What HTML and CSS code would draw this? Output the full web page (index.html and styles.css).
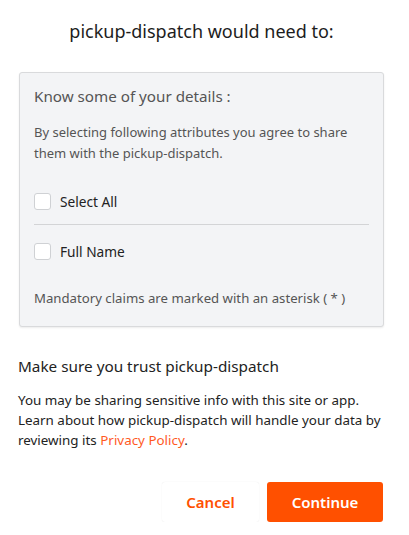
FILE: index.html
```html
<!DOCTYPE html>
<html lang="en">
<head>
<meta charset="utf-8">
<title>Consent</title>
<link rel="stylesheet" href="styles.css">
</head>
<body>
<div class="page">
  <h1 class="title">pickup-dispatch would need to:</h1>
  <div class="card">
    <h2 class="card-title">Know some of your details :</h2>
    <p class="card-desc">By selecting following attributes you agree to share them with the pickup-dispatch.</p>
    <label class="check-row">
      <span class="box"></span>
      <span class="check-label">Select All</span>
    </label>
    <div class="divider"></div>
    <label class="check-row">
      <span class="box"></span>
      <span class="check-label">Full Name</span>
    </label>
    <p class="mandatory">Mandatory claims are marked with an asterisk ( * )</p>
  </div>
  <h3 class="trust-title">Make sure you trust pickup-dispatch</h3>
  <p class="trust-text">You may be sharing sensitive info with this site or app. Learn about how pickup-dispatch will handle your data by reviewing its <a class="link" href="#">Privacy Policy</a>.</p>
  <div class="actions">
    <button class="btn btn-cancel">Cancel</button>
    <button class="btn btn-continue">Continue</button>
  </div>
</div>
</body>
</html>
```

FILE: styles.css
```css
html, body {
  margin: 0;
  padding: 0;
  background: #ffffff;
}
body {
  font-family: "Noto Sans", "Open Sans", sans-serif;
  color: #222222;
}
.page {
  width: 365px;
  margin-left: 19px;
  padding-top: 17px;
}
.title {
  margin: 0;
  text-align: center;
  font-size: 18px;
  font-weight: 400;
  line-height: 28px;
  color: #1d1d1d;
}
.card {
  margin-top: 27px;
  box-sizing: border-box;
  background: #f3f4f6;
  border: 1px solid #d9dadc;
  border-radius: 3px;
  box-shadow: 0 1px 2px rgba(0,0,0,0.08);
  padding: 12px 14px 14px 14px;
  height: 255px;
}
.card-title {
  margin: 0;
  font-size: 15.2px;
  font-weight: 400;
  line-height: 22px;
  color: #555555;
}
.card-desc {
  margin: 15px 0 0 0;
  font-size: 13px;
  line-height: 21px;
  color: #555555;
}
.check-row {
  display: flex;
  align-items: center;
  gap: 9px;
  height: 24px;
}
.card-desc + .check-row {
  margin-top: 25px;
}
.box {
  width: 15px;
  height: 15px;
  background: #ffffff;
  border: 1px solid #cfd1d4;
  border-radius: 3px;
}
.check-label {
  font-size: 13.7px;
  color: #222222;
}
.divider {
  height: 1px;
  background: #d3d4d6;
  margin: 11px 0 14px 0;
}
.mandatory {
  margin: 26px 0 0 0;
  font-size: 13.2px;
  line-height: 18px;
  color: #555555;
}
.trust-title {
  margin: 28px 0 0 -1px;
  font-size: 15.3px;
  font-weight: 400;
  line-height: 22px;
  color: #222222;
}
.trust-text {
  margin: 13px 0 0 -1px;
  font-size: 13.4px;
  line-height: 20px;
  color: #222222;
}
.link {
  color: #ff5a1f;
  text-decoration: none;
}
.actions {
  display: flex;
  justify-content: flex-end;
  gap: 8px;
  margin-top: 32px;
}
.btn {
  height: 40px;
  border-radius: 3px;
  font-family: inherit;
  font-size: 15px;
  font-weight: 600;
  cursor: pointer;
}
.btn-cancel {
  width: 97px;
  background: #ffffff;
  color: #ff5000;
  border: none;
  box-shadow: 0 0 1px rgba(0,0,0,0.12);
}
.btn-continue {
  width: 116px;
  margin-right: 1px;
  background: #ff5000;
  color: #ffffff;
  border: none;
}
```
